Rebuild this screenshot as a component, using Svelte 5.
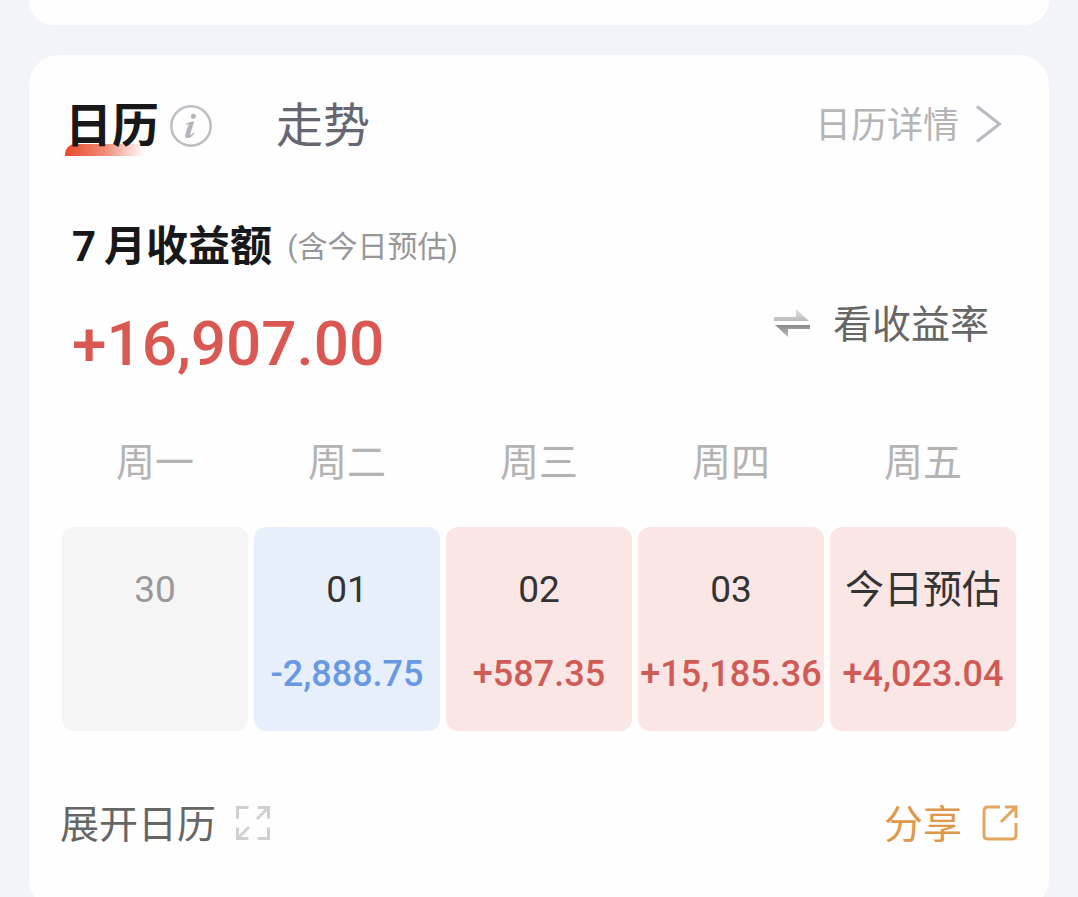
<script>
  const month = { label: '7', total: '+16,907.00' };
  const days = [
    { weekday: '周一', date: '30', amount: '', kind: 'idle' },
    { weekday: '周二', date: '01', amount: '-2,888.75', kind: 'loss' },
    { weekday: '周三', date: '02', amount: '+587.35', kind: 'gain' },
    { weekday: '周四', date: '03', amount: '+15,185.36', kind: 'gain' },
    { weekday: '周五', date: '今日预估', amount: '+4,023.04', kind: 'gain', today: true }
  ];
</script>

<main>
  <div class="card previous"></div>

  <section class="card">
    <header>
      <nav>
        <button class="tab active">日历</button>
        <button class="info" aria-label="说明">
          <svg width="42" height="42" viewBox="0 0 42 42">
            <circle cx="21" cy="21" r="19.7" fill="none" stroke="#bdbdc3" stroke-width="2.5" />
            <circle cx="23.4" cy="11.2" r="2.5" fill="#b4b4ba" />
            <path d="M15.6 19.6C17.8 17.6 20 16.7 24.2 16.3L20.3 28.6C19.8 30.5 20.9 30.4 23.6 27.6L24.5 28.5C21.5 32.2 18.9 33.5 16.7 33C15.1 32.6 14.8 31.2 15.3 29.2L18.4 19.9C18.8 18.7 18.1 18.7 16.2 20.5Z" fill="#b4b4ba" />
          </svg>
        </button>
        <button class="tab">走势</button>
      </nav>
      <a class="detail labelled" href="#detail">
        日历详情
        <svg width="26" height="38" viewBox="0 0 26 38" fill="none" stroke="#b9b9c2" stroke-width="3">
          <path d="M1 1.5L23.5 19L1 36.5" />
        </svg>
      </a>
    </header>

    <h2>
      <span>{month.label}</span> 月收益额
      <small>(含今日预估)</small>
    </h2>

    <div class="summary">
      <strong>{month.total}</strong>
      <button class="switch labelled">
        <svg width="36" height="28" viewBox="0 0 36 28">
          <defs>
            <linearGradient id="upper" x1="0" y1="0" x2="0" y2="1">
              <stop offset="0" stop-color="#e2e2e2" />
              <stop offset="1" stop-color="#bcbcbc" />
            </linearGradient>
            <linearGradient id="lower" x1="0" y1="0" x2="0" y2="1">
              <stop offset="0" stop-color="#8a8a8a" />
              <stop offset="1" stop-color="#bcbcbc" />
            </linearGradient>
          </defs>
          <path d="M0 8H22V0L35 12H0Z" fill="url(#upper)" />
          <path d="M36 20H14V28L1 16H36Z" fill="url(#lower)" />
        </svg>
        看收益率
      </button>
    </div>

    <table>
      <thead>
        <tr>
          {#each days as day}
            <th scope="col">{day.weekday}</th>
          {/each}
        </tr>
      </thead>
      <tbody>
        <tr>
          {#each days as day}
            <td class={day.kind}>
              <div class="date" class:today={day.today}>{day.date}</div>
              <div class="amount">{day.amount}</div>
            </td>
          {/each}
        </tr>
      </tbody>
    </table>

    <footer>
      <button class="expand labelled">
        展开日历
        <svg width="34" height="34" viewBox="0 0 34 34" fill="none" stroke="#d0d0d0" stroke-width="3">
          <path d="M1.5 12.5V1.5H12.5M22 1.5H32.5V12.5M32 2L21 13M1.5 21.5V32.5H12.5M2 32L13 21M32.5 21.5V32.5H21.5" />
        </svg>
      </button>
      <button class="share labelled">
        分享
        <svg width="36" height="36" viewBox="0 0 36 36" fill="none" stroke="#e3a55f" stroke-width="3">
          <path d="M18 2H6Q2 2 2 6V30Q2 34 6 34H30Q34 34 34 30V18M23 2H34V13M34 2L19 17" />
        </svg>
      </button>
    </footer>
  </section>
</main>

<style>
  :global(body) {
    margin: 0;
    background: #f2f4f9;
  }

  main {
    display: flex;
    flex-direction: column;
    gap: 30px;
    padding: 0 29px 30px;
    font-family: Roboto, "Noto Sans CJK SC", sans-serif;
    color: #18181a;
  }

  .card {
    background: #fefefe;
    border-radius: 30px;
    padding: 41px 0 54px;
  }

  .previous {
    border-radius: 0 0 30px 30px;
    padding: 25px 0 0;
  }

  button,
  a {
    display: flex;
    align-items: center;
    padding: 0;
    border: 0;
    background: none;
    font: inherit;
    color: inherit;
    text-decoration: none;
    cursor: pointer;
  }

  svg {
    display: block;
    flex: none;
  }

  .labelled svg {
    margin-bottom: 5px;
  }

  header,
  .summary,
  footer {
    display: flex;
    justify-content: space-between;
  }

  header {
    padding: 0 47px 0 36px;
    line-height: 60px;
  }

  nav {
    display: flex;
    align-items: center;
  }

  .tab {
    font-size: 47px;
    line-height: 60px;
    color: #666671;
  }

  .active {
    position: relative;
    z-index: 0;
    padding-right: 11px;
    font-weight: 700;
    color: #18181a;
  }

  .active::before {
    content: "";
    position: absolute;
    z-index: -1;
    left: 0;
    bottom: 0;
    width: 80px;
    height: 12px;
    border-top-left-radius: 10px;
    background: linear-gradient(90deg, #e8492b, #f08c78 50%, #fefefe);
  }

  .info {
    margin-right: 64px;
  }

  .detail {
    gap: 17px;
    font-size: 36px;
    color: #b5b5b8;
  }

  h2 {
    display: flex;
    align-items: center;
    gap: 8px;
    margin: 61px 0 0;
    padding: 0 43px;
    font-size: 42px;
    font-weight: 700;
    line-height: 60px;
  }

  small {
    margin-left: 7px;
    font-size: 30px;
    font-weight: 400;
    color: #97979a;
  }

  .summary {
    align-items: flex-start;
    margin-top: 27px;
    padding: 0 60px 0 43px;
  }

  strong {
    font-size: 62px;
    font-weight: 500;
    line-height: 80px;
    color: #d95952;
  }

  .switch {
    gap: 23px;
    font-size: 39px;
    line-height: 42px;
    color: #666;
  }

  table {
    width: calc(100% - 54px);
    margin: 43px 27px 0;
    table-layout: fixed;
    border-collapse: separate;
    border-spacing: 6px;
    text-align: center;
  }

  th {
    padding: 0 0 28px;
    font-size: 39px;
    font-weight: 400;
    line-height: 60px;
    color: #b3b3b3;
  }

  td {
    padding: 33px 0 27px;
    border-radius: 12px;
    vertical-align: top;
    white-space: nowrap;
    color: #333;
  }

  .date {
    font-size: 37px;
    line-height: 60px;
  }

  .today {
    font-size: 39px;
  }

  .amount {
    min-height: 60px;
    margin-top: 24px;
    font-size: 36px;
    font-weight: 500;
    line-height: 60px;
  }

  .idle {
    background: #f5f5f5;
    color: #999;
  }

  .loss {
    background: #e7effd;
  }

  .loss .amount {
    color: #6899e2;
  }

  .gain {
    background: #fae6e5;
  }

  .gain .amount {
    color: #d05b56;
  }

  footer {
    margin-top: 58px;
    padding: 0 31px;
    font-size: 39px;
    line-height: 60px;
  }

  .expand {
    gap: 20px;
    color: #666;
  }

  .share {
    gap: 20px;
    color: #df974b;
  }
</style>
